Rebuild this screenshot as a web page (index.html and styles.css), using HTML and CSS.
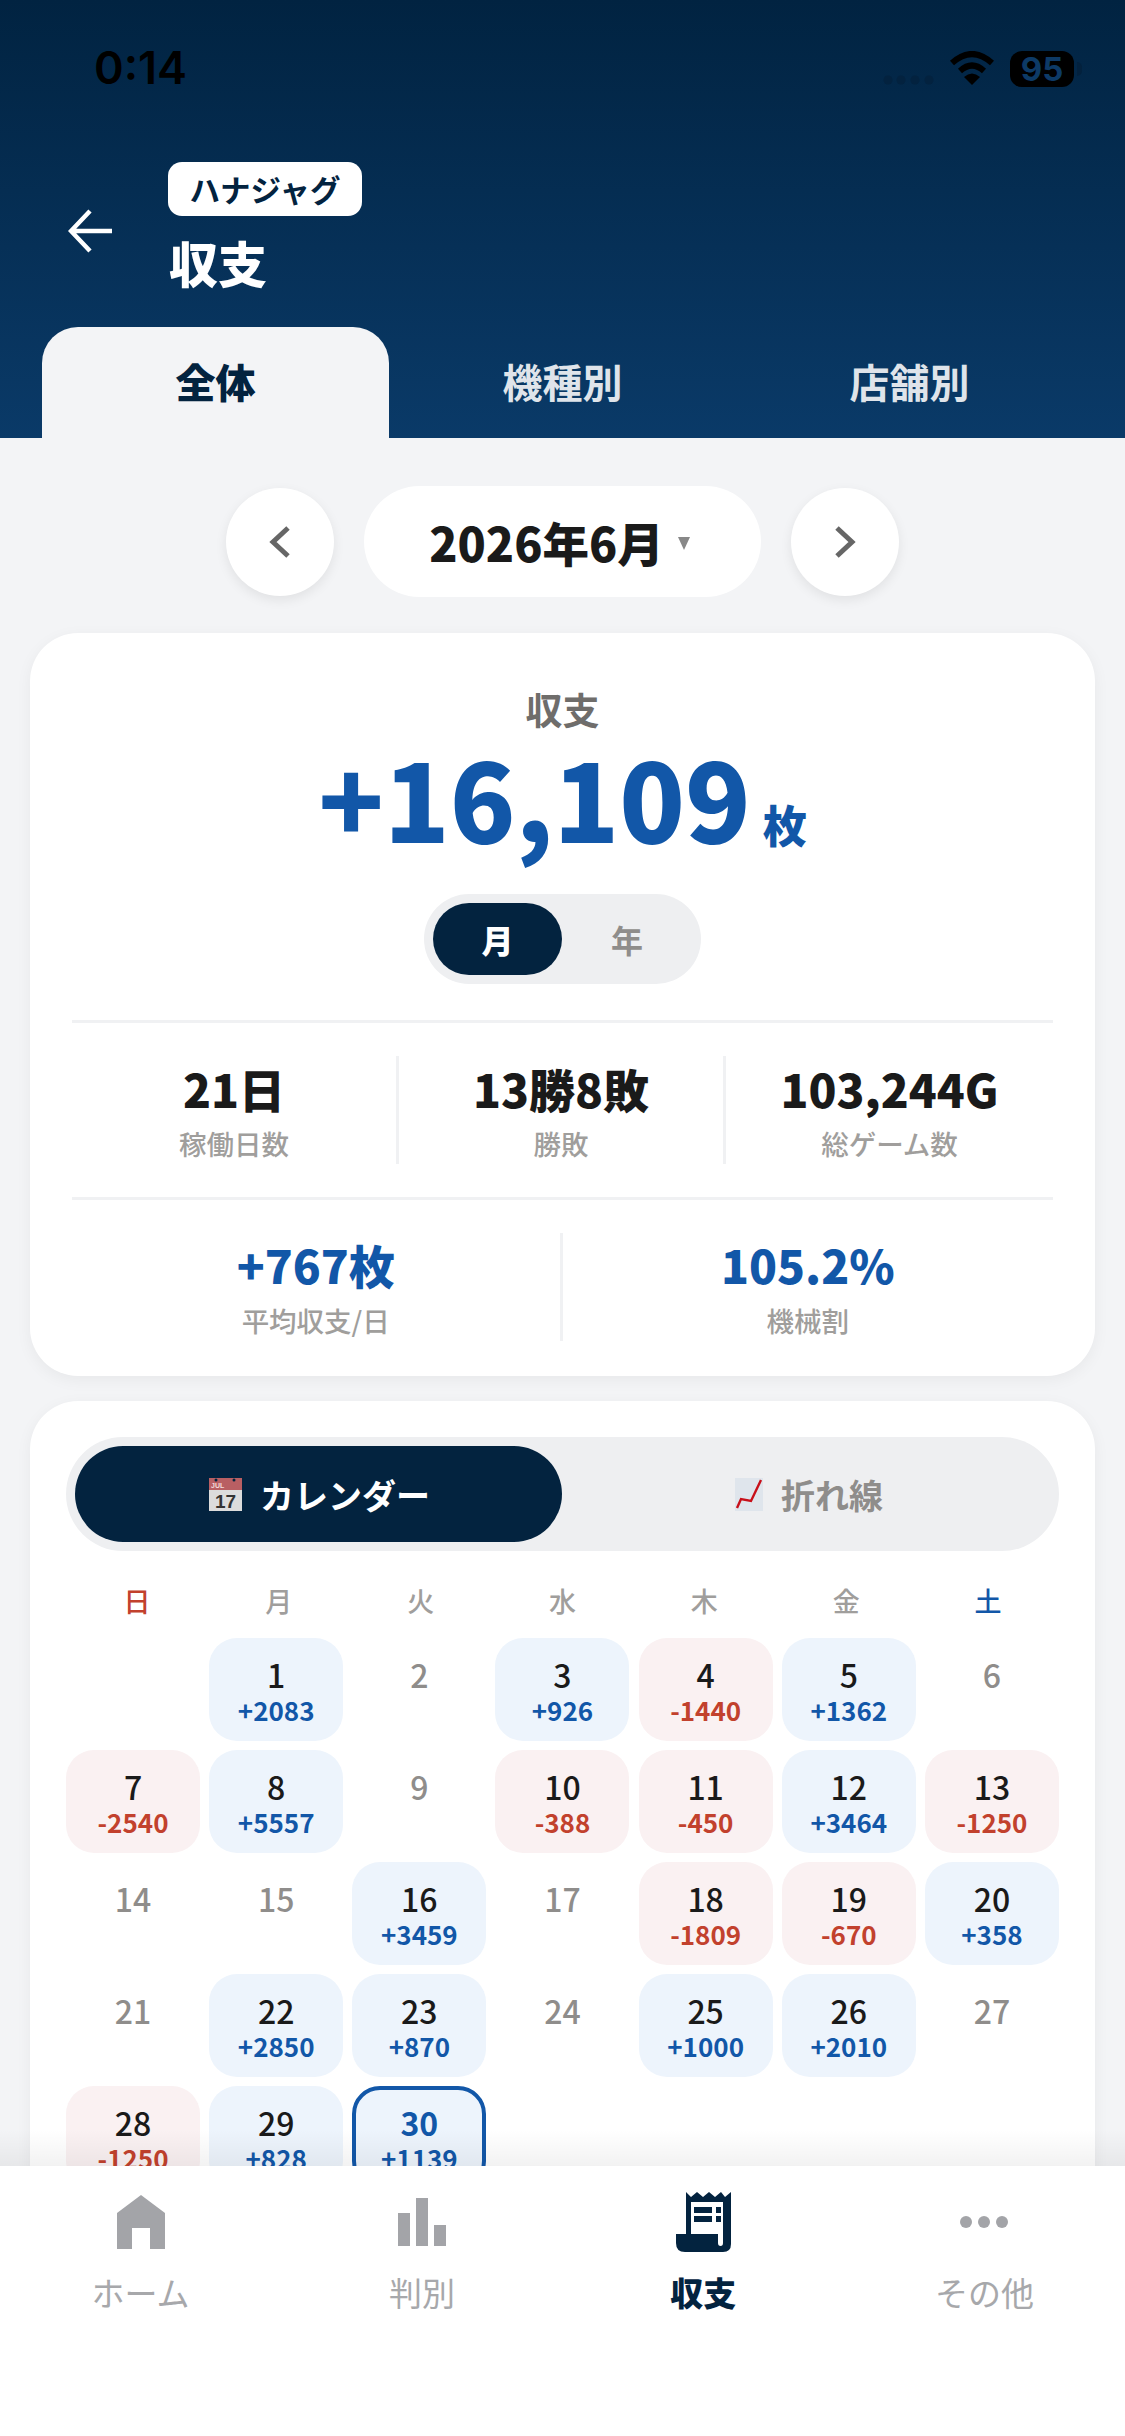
FILE: index.html
```html
<!DOCTYPE html>
<html lang="ja">
<head>
    <meta charset="UTF-8">
    <link rel="stylesheet" href="styles.css">
    <title>収支</title>
</head>
<body>
    <div class="app">
        <header class="top">
            <div class="status">
                <span class="clock">0:14</span>
                <div class="status-right">
                    <svg class="signal" width="52" height="10" viewBox="0 0 52 10"><circle cx="5" cy="5" r="4.5"/><circle cx="18" cy="5" r="4.5"/><circle cx="32" cy="5" r="4.5"/><circle cx="46" cy="5" r="4.5"/></svg>
                    <svg class="wifi" width="46" height="34" viewBox="0 0 46 34">
                        <path d="M3 12 Q23 -6 43 12" fill="none" stroke="#000" stroke-width="6"/>
                        <path d="M11 20 Q23 9 35 20" fill="none" stroke="#000" stroke-width="6"/>
                        <path d="M23 34 L15 26 Q23 19 31 26 Z"/>
                    </svg>
                    <div class="battery">95</div>
                    <div class="battery-cap"></div>
                </div>
            </div>
            <div class="title-row">
                <svg class="back" width="46" height="44" viewBox="0 0 46 44"><path d="M44 22 H3 M22 2 L3 22 L22 42" fill="none" stroke="#fff" stroke-width="4.5"/></svg>
                <div>
                    <span class="badge">ハナジャグ</span>
                    <h1>収支</h1>
                </div>
            </div>
            <nav class="tabs">
                <div class="tab active">全体</div>
                <div class="tab">機種別</div>
                <div class="tab">店舗別</div>
            </nav>
        </header>

        <main class="content">
            <div class="month-nav">
                <div class="round-btn"><svg width="22" height="32" viewBox="0 0 22 32"><path d="M19 2 L4 16 L19 30" fill="none" stroke="#666" stroke-width="5"/></svg></div>
                <div class="month-pill">2026年6月<span class="caret"></span></div>
                <div class="round-btn"><svg width="22" height="32" viewBox="0 0 22 32"><path d="M3 2 L18 16 L3 30" fill="none" stroke="#666" stroke-width="5"/></svg></div>
            </div>

            <section class="card summary">
                <div class="summary-label">収支</div>
                <div class="total">+16,109<span class="unit">枚</span></div>
                <div class="toggle">
                    <div class="toggle-item on">月</div>
                    <div class="toggle-item">年</div>
                </div>
                <div class="stats three">
                    <div class="stat"><b>21日</b><span>稼働日数</span></div>
                    <div class="stat"><b>13勝8敗</b><span>勝敗</span></div>
                    <div class="stat"><b>103,244G</b><span>総ゲーム数</span></div>
                </div>
                <div class="stats two">
                    <div class="stat blue"><b>+767枚</b><span>平均収支/日</span></div>
                    <div class="stat blue"><b>105.2%</b><span>機械割</span></div>
                </div>
            </section>

            <section class="card calendar">
                <div class="segment">
                    <div class="seg-item on">
                        <svg width="33" height="33" viewBox="0 0 33 33">
                            <rect width="33" height="33" fill="#dcdcdc"/>
                            <rect width="33" height="12" fill="#b95f63"/>
                            <circle cx="7" cy="2" r="1.5" fill="#03233f"/>
                            <circle cx="25" cy="2" r="1.5" fill="#03233f"/>
                            <text x="2" y="10" font-size="7" fill="#f3dcdc" font-family="Liberation Sans">JUL</text>
                            <text x="16.5" y="30" font-size="19" text-anchor="middle" fill="#333" font-family="Liberation Sans">17</text>
                        </svg>
                        カレンダー
                    </div>
                    <div class="seg-item">
                        <svg width="28" height="33" viewBox="0 0 28 33">
                            <rect width="28" height="33" fill="#dfe5ec"/>
                            <path d="M2 30 L6 21 L16 23 L26 2" fill="none" stroke="#c8101a" stroke-width="2.4"/>
                        </svg>
                        折れ線
                    </div>
                </div>
                <div class="weekdays">
                    <div class="sun">日</div><div>月</div><div>火</div><div>水</div><div>木</div><div>金</div><div class="sat">土</div>
                </div>
                <div class="days">
                    <div class="day none"></div>
                    <div class="day plus">1<small>+2083</small></div>
                    <div class="day">2</div>
                    <div class="day plus">3<small>+926</small></div>
                    <div class="day minus">4<small>-1440</small></div>
                    <div class="day plus">5<small>+1362</small></div>
                    <div class="day">6</div>
                    <div class="day minus">7<small>-2540</small></div>
                    <div class="day plus">8<small>+5557</small></div>
                    <div class="day">9</div>
                    <div class="day minus">10<small>-388</small></div>
                    <div class="day minus">11<small>-450</small></div>
                    <div class="day plus">12<small>+3464</small></div>
                    <div class="day minus">13<small>-1250</small></div>
                    <div class="day">14</div>
                    <div class="day">15</div>
                    <div class="day plus">16<small>+3459</small></div>
                    <div class="day">17</div>
                    <div class="day minus">18<small>-1809</small></div>
                    <div class="day minus">19<small>-670</small></div>
                    <div class="day plus">20<small>+358</small></div>
                    <div class="day">21</div>
                    <div class="day plus">22<small>+2850</small></div>
                    <div class="day plus">23<small>+870</small></div>
                    <div class="day">24</div>
                    <div class="day plus">25<small>+1000</small></div>
                    <div class="day plus">26<small>+2010</small></div>
                    <div class="day">27</div>
                    <div class="day minus">28<small>-1250</small></div>
                    <div class="day plus">29<small>+828</small></div>
                    <div class="day plus today">30<small>+1139</small></div>
                </div>
            </section>
        </main>

        <footer class="bottom-nav">
            <div class="nav-item">
                <svg width="48" height="54" viewBox="0 0 48 54"><path d="M24 0 L48 18 V54 H33 V33 H15 V54 H0 V18 Z" fill="#a3a4a8"/></svg>
                <span>ホーム</span>
            </div>
            <div class="nav-item">
                <svg width="48" height="54" viewBox="0 0 48 54"><path d="M0 18 H12 V51 H0 Z M18 3 H30 V51 H18 Z M36 30 H48 V51 H36 Z" fill="#a3a4a8"/></svg>
                <span>判別</span>
            </div>
            <div class="nav-item on">
                <svg width="55" height="60" viewBox="0 0 55 60">
                    <path d="M10 0 L15 5 L21 0 L27 5 L33 0 L39 5 L45 0 L49 5 L55 0 V52 Q55 60 47 60 H9 Q0 60 0 51 V42 H10 Z" fill="#03233f"/>
                    <path d="M15 10 H47 V42 H15 Z" fill="#fff"/>
                    <path d="M42 40 H47 V51 Q47 54 44.500 54 Q42 54 42 51 Z" fill="#fff"/>
                    <path d="M18 15 H36 V21 H18 Z M18 24 H36 V30 H18 Z M40 15 H45 V21 H40 Z M40 24 H45 V30 H40 Z" fill="#03233f"/>
                </svg>
                <span>収支</span>
            </div>
            <div class="nav-item">
                <svg width="48" height="54" viewBox="0 0 48 54"><circle cx="6" cy="27" r="6" fill="#a3a4a8"/><circle cx="24" cy="27" r="6" fill="#a3a4a8"/><circle cx="42" cy="27" r="6" fill="#a3a4a8"/></svg>
                <span>その他</span>
            </div>
        </footer>
    </div>
</body>
</html>
```

FILE: styles.css
```css
* {
  box-sizing: border-box;
}

body {
  margin: 0;
  background: #f3f4f6;
  font-family: "Noto Sans CJK JP", "Noto Sans", sans-serif;
  color: #1a1a1a;
}

.app {
  width: 1125px;
  height: 2436px;
  display: flex;
  flex-direction: column;
  overflow: hidden;
}

.top {
  height: 438px;
  flex: none;
  background: linear-gradient(180deg, #012341 0%, #0a3a68 100%);
}

.status {
  height: 162px;
  padding: 44px 43px 0 94px;
  display: flex;
  justify-content: space-between;
  align-items: flex-start;
}

.clock {
  font-family: Inter, "Liberation Sans", sans-serif;
  font-size: 45px;
  font-weight: 600;
  line-height: 48px;
  color: #000;
}

.status-right {
  display: flex;
  align-items: flex-start;
  margin-top: 7px;
}

.signal {
  fill: #03223f;
  margin-top: 24px;
  margin-right: 14px;
}

.wifi {
  margin-right: 15px;
}

.battery {
  width: 64px;
  height: 36px;
  border-radius: 12px;
  background: #000;
  color: #0d3a66;
  font-family: Inter, "Liberation Sans", sans-serif;
  font-size: 33px;
  font-weight: 700;
  line-height: 36px;
  text-align: center;
}

.battery-cap {
  width: 5px;
  height: 14px;
  margin: 11px 0 0 3px;
  border-radius: 0 5px 5px 0;
  background: #03213d;
}

.title-row {
  height: 165px;
  padding-left: 68px;
  display: flex;
  align-items: flex-start;
  gap: 54px;
}

.back {
  margin-top: 47px;
}

.badge {
  display: block;
  width: 194px;
  height: 54px;
  border-radius: 14px;
  background: #fff;
  color: #03233f;
  font-size: 30.5px;
  font-weight: 700;
  line-height: 54px;
  text-align: center;
}

h1 {
  margin: 16px 0 0 1px;
  color: #fff;
  font-size: 49px;
  font-weight: 900;
  line-height: 60px;
}

.tabs {
  display: grid;
  grid-template-columns: repeat(3, 347px);
  padding-left: 42px;
}

.tab {
  height: 111px;
  color: #dfe4ea;
  font-size: 40px;
  font-weight: 700;
  line-height: 108px;
  text-align: center;
}

.tab.active {
  border-radius: 36px 36px 0 0;
  background: #f3f4f6;
  color: #03233f;
  font-weight: 900;
}

.content {
  flex: 1;
  min-height: 0;
  padding: 48px 30px 0;
}

.month-nav {
  display: flex;
  justify-content: center;
  align-items: center;
  gap: 30px;
  height: 111px;
}

.round-btn {
  width: 108px;
  height: 108px;
  border-radius: 50%;
  background: #fff;
  box-shadow: 0 4px 12px rgba(0, 0, 0, 0.08);
  display: flex;
  align-items: center;
  justify-content: center;
}

.month-pill {
  width: 397px;
  height: 111px;
  padding-right: 6px;
  border-radius: 56px;
  background: #fff;
  font-size: 46.5px;
  font-weight: 900;
  display: flex;
  align-items: center;
  justify-content: center;
}

.caret {
  margin: 4px 0 0 14px;
  border-left: 6.5px solid transparent;
  border-right: 6.5px solid transparent;
  border-top: 13px solid #888;
}

.card {
  background: #fff;
  border-radius: 48px;
  box-shadow: 0 4px 16px rgba(0, 0, 0, 0.05);
}

.summary {
  margin-top: 36px;
  height: 743px;
  padding: 52px 42px 0;
  text-align: center;
}

.summary-label {
  color: #6f6d6b;
  font-size: 37px;
  font-weight: 700;
  line-height: 48px;
}

.total {
  height: 124px;
  margin-top: 1px;
  color: #1257a8;
  font-size: 108px;
  font-weight: 900;
  line-height: 124px;
}

.unit {
  margin-left: 12px;
  font-size: 44px;
}

.toggle {
  width: 277px;
  height: 90px;
  margin: 36px auto 0;
  padding: 9px;
  border-radius: 45px;
  background: #eeeff1;
  display: flex;
}

.toggle-item {
  flex: 1;
  color: #8f8d8b;
  font-size: 32px;
  font-weight: 700;
  line-height: 72px;
}

.toggle-item.on {
  flex: none;
  width: 129px;
  border-radius: 36px;
  background: #03233f;
  color: #fff;
  font-weight: 900;
}

.stats {
  display: grid;
  margin-top: 36px;
  padding-top: 33px;
  border-top: 3px solid #f0f1f3;
}

.stats.three {
  grid-template-columns: repeat(3, 1fr);
}

.stats.two {
  margin-top: 33px;
  grid-template-columns: repeat(2, 1fr);
}

.stat {
  height: 108px;
  border-right: 3px solid #f0f1f3;
}

.stat:last-child {
  border-right: none;
}

.stat b {
  display: block;
  font-size: 46px;
  font-weight: 900;
  line-height: 64px;
}

.stat span {
  display: block;
  margin-top: 3px;
  color: #a09e9c;
  font-size: 27.5px;
  font-weight: 500;
  line-height: 40px;
}

.stat.blue b {
  color: #1257a8;
  margin-top: -1px;
}

.stat.blue span {
  margin-top: 4px;
}

.calendar {
  margin-top: 25px;
  height: 1000px;
  padding: 36px 36px 0;
}

.segment {
  height: 114px;
  padding: 9px;
  border-radius: 57px;
  background: #eeeff1;
  display: grid;
  grid-template-columns: 487px 1fr;
}

.seg-item {
  border-radius: 48px;
  color: #8f8d8b;
  font-size: 34px;
  font-weight: 700;
  display: flex;
  align-items: center;
  justify-content: center;
  gap: 18px;
}

.seg-item:last-child {
  padding-left: 6px;
}

.seg-item.on {
  padding-left: 2px;
  background: #03233f;
  color: #fff;
}

.weekdays {
  display: grid;
  grid-template-columns: repeat(7, 1fr);
  margin-top: 30px;
  color: #a09e9c;
  font-size: 27px;
  font-weight: 500;
  line-height: 40px;
  text-align: center;
}

.weekdays .sun {
  color: #c2412d;
}

.weekdays .sat {
  color: #1257a8;
}

.days {
  display: grid;
  grid-template-columns: repeat(7, 134px);
  grid-auto-rows: 103px;
  gap: 9px 9.17px;
  margin-top: 17px;
}

.day {
  padding-top: 17px;
  border-radius: 28px;
  color: #8f8d8b;
  font-size: 32px;
  font-weight: 500;
  line-height: 38px;
  text-align: center;
}

.day small {
  display: block;
  font-size: 26px;
  font-weight: 700;
  line-height: 34px;
}

.day.plus {
  background: #edf4fc;
  color: #1a1a1a;
}

.day.plus small {
  color: #1257a8;
}

.day.minus {
  background: #faf1f2;
  color: #1a1a1a;
}

.day.minus small {
  color: #c2412d;
}

.day.today {
  padding-top: 13px;
  border: 4px solid #1257a8;
  color: #1257a8;
  font-weight: 700;
}

.bottom-nav {
  position: relative;
  z-index: 1;
  height: 270px;
  flex: none;
  padding-top: 25px;
  background: #fff;
  display: grid;
  grid-template-columns: repeat(4, 281.25px);
  align-items: start;
}

.bottom-nav::before {
  content: "";
  position: absolute;
  left: 0;
  right: 0;
  top: -36px;
  height: 36px;
  background: linear-gradient(180deg, rgba(0, 0, 0, 0), rgba(0, 0, 0, 0.05));
}

.nav-item {
  display: flex;
  flex-direction: column;
  align-items: center;
  color: #a7a8ab;
  font-size: 33px;
  line-height: 46px;
}

.nav-item svg {
  height: 62px;
}

.nav-item span {
  margin-top: 16px;
}

.nav-item.on {
  color: #03233f;
  font-weight: 900;
}
```
